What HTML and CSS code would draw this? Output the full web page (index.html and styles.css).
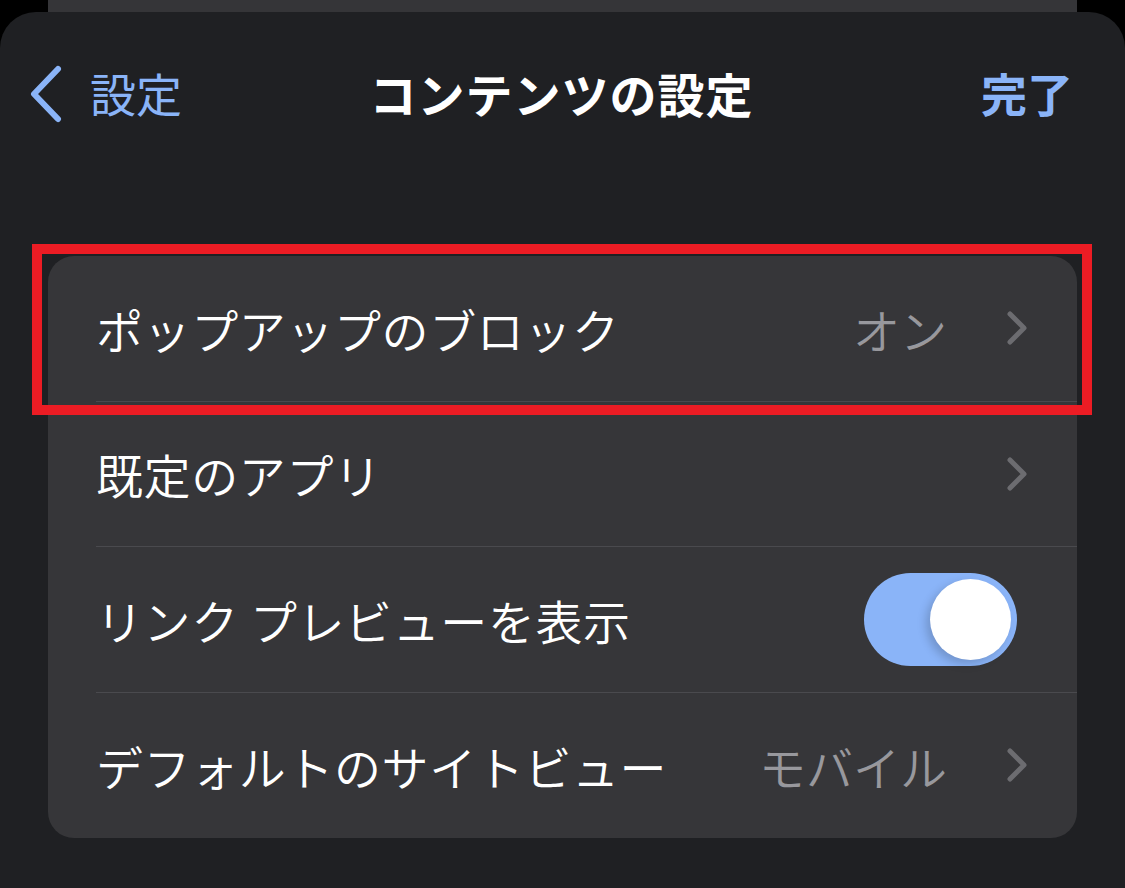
FILE: index.html
```html
<!DOCTYPE html>
<html lang="ja">
<head>
<meta charset="utf-8">
<title>コンテンツの設定</title>
<link rel="stylesheet" href="styles.css">
</head>
<body>
<div class="back-sheet"></div>
<div class="sheet">
  <header class="nav">
    <div class="nav-left">
      <svg class="back-chevron" width="36" height="58" viewBox="0 0 36 58"><path d="M30 4 L6 29 L30 54" fill="none" stroke="#8ab4f8" stroke-width="6" stroke-linecap="round" stroke-linejoin="round"/></svg>
      <span class="back-label">設定</span>
    </div>
    <h1 class="nav-title">コンテンツの設定</h1>
    <div class="nav-right"><span class="done">完了</span></div>
  </header>

  <section class="card">
    <div class="row highlighted">
      <span class="label">ポップアップのブロック</span>
      <span class="value">オン</span>
      <svg class="chev" width="24" height="36" viewBox="0 0 24 36"><path d="M5 4 L19 18 L5 32" fill="none" stroke="#6c6c70" stroke-width="5" stroke-linecap="round" stroke-linejoin="round"/></svg>
      <div class="annot"></div>
    </div>
    <div class="row">
      <span class="label">既定のアプリ</span>
      <svg class="chev" width="24" height="36" viewBox="0 0 24 36"><path d="M5 4 L19 18 L5 32" fill="none" stroke="#6c6c70" stroke-width="5" stroke-linecap="round" stroke-linejoin="round"/></svg>
    </div>
    <div class="row">
      <span class="label">リンク プレビューを表示</span>
      <div class="toggle on"><div class="knob"></div></div>
    </div>
    <div class="row">
      <span class="label">デフォルトのサイトビュー</span>
      <span class="value">モバイル</span>
      <svg class="chev" width="24" height="36" viewBox="0 0 24 36"><path d="M5 4 L19 18 L5 32" fill="none" stroke="#6c6c70" stroke-width="5" stroke-linecap="round" stroke-linejoin="round"/></svg>
    </div>
  </section>
</div>
</body>
</html>
```

FILE: styles.css
```css
* { box-sizing: border-box; }
html, body { margin: 0; padding: 0; }
body {
  background: #000;
  width: 1125px;
  height: 888px;
  overflow: hidden;
  font-family: "Noto Sans CJK JP", "Noto Sans", sans-serif;
  color: #fff;
}
.back-sheet {
  height: 12px;
  margin: 0 48px;
  background: #353538;
}
.sheet {
  height: 876px;
  background: #1f2023;
  border-radius: 36px 36px 0 0;
}
.nav {
  display: grid;
  grid-template-columns: 1fr auto 1fr;
  align-items: center;
  height: 168px;
  padding: 0 52px 8px 28px;
}
.nav-left {
  display: flex;
  align-items: center;
  gap: 26px;
  color: #8ab4f8;
}
.back-chevron { display: block; margin-top: 4px; }
.back-label {
  font-size: 46px;
  font-weight: 400;
  line-height: 1;
}
.nav-title {
  margin: 0 0 0 22px;
  font-size: 47px;
  font-weight: 700;
  line-height: 1;
  letter-spacing: 1px;
  color: #fff;
}
.nav-right {
  display: flex;
  justify-content: flex-end;
}
.done {
  font-size: 46px;
  font-weight: 700;
  color: #8ab4f8;
  line-height: 1;
}
.card {
  margin: 76px 48px 0 48px;
  background: #363639;
  border-radius: 26px;
}
.row {
  position: relative;
  display: flex;
  align-items: center;
  height: 145.5px;
  margin-left: 48px;
  padding-right: 48px;
  border-bottom: 1.5px solid #4a4a4e;
}
.row:last-child { border-bottom: none; }
.label {
  flex: 1;
  font-size: 47px;
  font-weight: 350;
  line-height: 1;
  color: #fff;
  letter-spacing: 0.6px;
}
.value {
  font-size: 47px;
  font-weight: 350;
  line-height: 1;
  color: #98989d;
  margin-right: 58px;
}
.chev { display: block; }
.toggle {
  width: 153px;
  height: 93px;
  border-radius: 47px;
  background: #8ab4f8;
  position: relative;
  margin-right: 12px;
}
.knob {
  position: absolute;
  right: 6px;
  top: 6px;
  width: 81px;
  height: 81px;
  border-radius: 50%;
  background: #fff;
  box-shadow: -4px 4px 10px rgba(0,0,0,0.18);
}
.annot {
  position: absolute;
  left: -64px;
  top: -12px;
  width: 1060px;
  height: 171px;
  border: 10px solid #ec1c24;
  pointer-events: none;
}
```
